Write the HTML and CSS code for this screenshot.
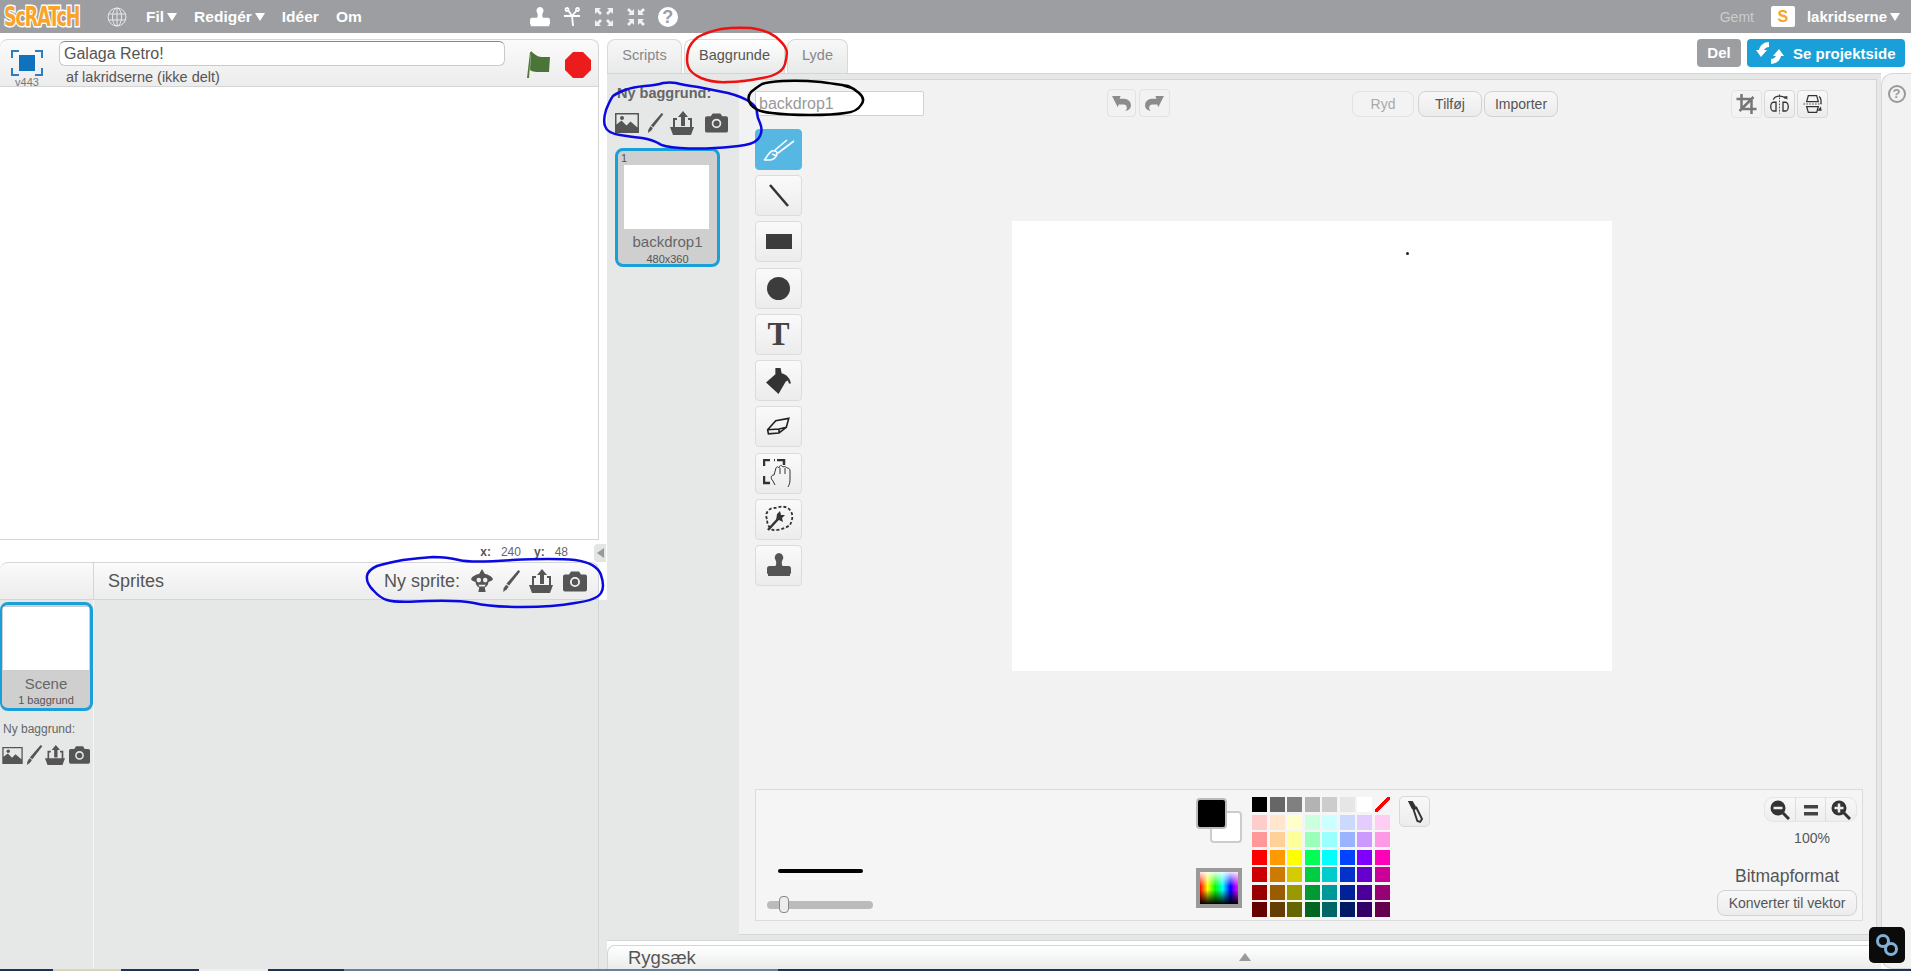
FILE: index.html
```html
<!DOCTYPE html>
<html lang="da">
<head>
<meta charset="utf-8">
<title>Galaga Retro! på Scratch</title>
<link rel="stylesheet" href="styles.css">
</head>
<body>
<svg class="defs" width="0" height="0">
  <symbol id="i-image" viewBox="0 0 24 20"><path fill-rule="evenodd" d="M0 0h24v20H0z M1.500 1.500v10l5-4 5 5 4-4 7 6V1.500z"/><circle cx="7" cy="5" r="2"/></symbol>
  <symbol id="i-brush" viewBox="0 0 24 24"><path d="M20 0l2 1.500L10 17l-3-2z"/><path d="M6.500 16l3 2-2 3-4 3 .5-4z"/></symbol>
  <symbol id="i-upload" viewBox="0 0 24 24"><path d="M13 0l5 6h-3v9h-4V6H8z"/><path d="M3 7h4v2H5v7h15V9h-2V7h4v9h2l-3 8H3l-3-8h3z"/></symbol>
  <symbol id="i-camera" viewBox="0 0 24 20"><path fill-rule="evenodd" d="M2 3h4l2-3h8l2 3h4a2 2 0 0 1 2 2v13a2 2 0 0 1-2 2H2a2 2 0 0 1-2-2V5a2 2 0 0 1 2-2z M12 5.500a5 5 0 1 0 0 10a5 5 0 0 0 0-10z"/><circle cx="12" cy="10.500" r="3.200"/></symbol>
  <symbol id="i-sprite" viewBox="0 0 24 26"><path d="M12 0l3 5c4 1 8 3 9 6-1 2-3 2-5 3 0 3-2 5-4 6l1 5H8l1-5c-2-1-4-3-4-6-2-1-4-1-5-3 1-3 5-5 9-6z"/><circle cx="8.500" cy="12" r="2.500" fill="#eee"/><circle cx="15.500" cy="12" r="2.500" fill="#eee"/><path d="M8 17h8l-1 2H9z" fill="#eee"/></symbol>
  <symbol id="i-stamp" viewBox="0 0 24 24"><path d="M12 0a4.500 4.500 0 0 1 3.500 7c-1 1.500-1 4 0 6h6a2.500 2.500 0 0 1 2.500 2.500V20a1 1 0 0 1-1 1v2H1v-2a1 1 0 0 1-1-1v-4.500A2.500 2.500 0 0 1 2.500 13h6c1-2 1-4.500 0-6A4.500 4.500 0 0 1 12 0z"/></symbol>
</svg>

<header class="topbar">
  <span class="logo-box"><span class="logo">ScRATcH</span></span>
  <svg class="globe" viewBox="0 0 20 20" fill="none" stroke="#e8e8e8" stroke-width="1"><circle cx="10" cy="10" r="9"/><ellipse cx="10" cy="10" rx="4.500" ry="9"/><path d="M10 1v18M1.500 7h17M1.500 13h17"/></svg>
  <nav class="menu">
    <span class="menu-item">Fil<i class="caret"></i></span>
    <span class="menu-item">Redigér<i class="caret"></i></span>
    <span class="menu-item">Idéer</span>
    <span class="menu-item">Om</span>
  </nav>
  <div class="top-tools">
    <svg class="top-icon" fill="#fff"><use href="#i-stamp"/></svg>
    <svg class="top-icon" viewBox="0 0 20 20" fill="none" stroke="#fff" stroke-width="1.800"><path d="M2 9h16M10 8l1 11M6 3l4 6 5-6"/><circle cx="5" cy="2.500" r="1.500"/><circle cx="15.500" cy="2.500" r="1.500"/></svg>
    <svg class="top-icon" viewBox="0 0 20 20" fill="#f0f0f0"><path d="M1 1h6L5 3l3 3-2 2-3-3-2 2zM19 1v6l-2-2-3 3-2-2 3-3-2-2zM1 19v-6l2 2 3-3 2 2-3 3 2 2zM19 19h-6l2-2-3-3 2-2 3 3 2-2z"/></svg>
    <svg class="top-icon" viewBox="0 0 20 20" fill="#f0f0f0"><path d="M8 8H2l2-2-3-3 2-2 3 3 2-2zM12 8V2l2 2 3-3 2 2-3 3 2 2zM8 12v6l-2-2-3 3-2-2 3-3-2-2zM12 12h6l-2 2 3 3-2 2-3-3-2 2z"/></svg>
    <span class="top-help">?</span>
  </div>
  <div class="account">
    <span class="saved">Gemt</span>
    <span class="user-badge">S</span>
    <span class="menu-item user">lakridserne<i class="caret"></i></span>
  </div>
</header>

<main class="main">
  <section class="left">
    <div class="stage-head">
      <div class="fullscreen-wrap">
        <svg class="fullscreen" viewBox="0 0 32 26" fill="none" stroke="#2a7fc4" stroke-width="2"><path d="M1 8V1h7M24 1h7v7M1 18v7h7M24 25h7v-7"/><rect x="8" y="5" width="16" height="16" fill="#0f72bd" stroke="none"/></svg>
        <span class="version">v443</span>
      </div>
      <div class="title-wrap">
        <div class="title-input">Galaga Retro!</div>
        <div class="byline">af lakridserne (ikke delt)</div>
      </div>
      <svg class="flag" viewBox="0 0 26 28"><path d="M5 2l1 0-2 26H2z" fill="#4f7a3a"/><path d="M6 1c5 5 8 6 12 6h7l-1 15H15c-4 0-7 0-10-2z" fill="#4b7439"/></svg>
      <svg class="stop" viewBox="0 0 26 26"><path d="M8 0h10l8 8v10l-8 8H8l-8-8V8z" fill="#ec1c1c"/></svg>
    </div>
    <div class="stage"></div>
    <div class="coords">
      <b>x:</b><span class="coord-val">240</span><b>y:</b><span class="coord-val">48</span>
    </div>
    <div class="sprites">
      <div class="sprites-head">
        <div class="sprites-corner"></div>
        <div class="sprites-title">Sprites</div>
        <div class="new-sprite">
          <span>Ny sprite:</span>
          <svg class="icon-sprite"><use href="#i-sprite"/></svg>
          <svg class="icon-brush"><use href="#i-brush"/></svg>
          <svg class="icon-up"><use href="#i-upload"/></svg>
          <svg class="icon-cam"><use href="#i-camera"/></svg>
        </div>
      </div>
      <div class="sprites-body">
        <aside class="scene-col">
          <div class="scene-tile">
            <div class="scene-thumb"></div>
            <div class="scene-name">Scene</div>
            <div class="scene-count">1 baggrund</div>
          </div>
          <div class="scene-new">Ny baggrund:</div>
          <div class="scene-icons">
            <svg class="si-img"><use href="#i-image"/></svg>
            <svg class="si-brush"><use href="#i-brush"/></svg>
            <svg class="si-up"><use href="#i-upload"/></svg>
            <svg class="si-cam"><use href="#i-camera"/></svg>
          </div>
        </aside>
        <div class="sprite-list"></div>
      </div>
    </div>
    <span class="collapse"><i></i></span>
  </section>

  <section class="right">
    <div class="tabrow">
      <span class="tab tab-scripts">Scripts</span>
      <span class="tab tab-active">Baggrunde</span>
      <span class="tab tab-lyde">Lyde</span>
      <div class="share">
        <span class="btn-share">Del</span>
        <span class="btn-page">
          <svg class="page-arrows" viewBox="0 0 28 24" fill="#fff"><path d="M13 1C8 1 4 4 3 9H0l5 7 6-7H8c1-2 3-3 5-3zM15 23c5 0 9-3 10-8h3l-5-7-6 7h3c-1 2-3 3-5 3z"/></svg>
          Se projektside
        </span>
      </div>
    </div>
    <div class="right-body">
      <div class="work">
        <div class="editor">
          <aside class="backdrops">
            <div class="new-backdrop">Ny baggrund:</div>
            <div class="backdrop-icons">
              <svg class="bi-img"><use href="#i-image"/></svg>
              <svg class="bi-brush"><use href="#i-brush"/></svg>
              <svg class="bi-up"><use href="#i-upload"/></svg>
              <svg class="bi-cam"><use href="#i-camera"/></svg>
            </div>
            <div class="backdrop-tile">
              <span class="backdrop-num">1</span>
              <div class="backdrop-thumb"></div>
              <div class="backdrop-name">backdrop1</div>
              <div class="backdrop-size">480x360</div>
            </div>
          </aside>
          <div class="paint-wrap">
            <div class="paint">
              <div class="paint-top">
                <div class="name-input">backdrop1</div>
                <div class="undo-group">
                  <span class="mini-btn mini-undo"><svg class="mini-svg" viewBox="0 0 20 18" fill="#8c8c8c"><path d="M0 1h9L8 4h3c5 0 9 2 9 7 0 3-2 5-6 6 2-2 2-4 1-6-1-1-3-1-5-1H7L6 13z"/></svg></span>
                  <span class="mini-btn mini-redo"><svg class="mini-svg" viewBox="0 0 20 18" fill="#8c8c8c"><path d="M20 1h-9l1 3H9C4 4 0 6 0 11c0 3 2 5 6 6-2-2-2-4-1-6 1-1 3-1 5-1h3l1 3z"/></svg></span>
                </div>
                <div class="act-group">
                  <span class="act act-ryd">Ryd</span>
                  <span class="act act-add">Tilføj</span>
                  <span class="act act-imp">Importer</span>
                </div>
                <div class="crop-group">
                  <span class="crop crop-off"><svg class="crop-svg" viewBox="0 0 20 20" fill="none" stroke="#777" stroke-width="2.500"><path d="M5 0v15h15M0 5h15v15M3 17L17 3" /></svg></span>
                  <span class="crop"><svg class="crop-svg" viewBox="0 0 24 22" fill="none" stroke="#333" stroke-width="1.500"><path d="M12 0v22" stroke-dasharray="2 1.500" stroke-width="1"/><path d="M8 9v10H5C3 19 2 16 2 14s1-5 3-5zM16 9v10h3c2 0 3-3 3-5s-1-5-3-5z"/><path d="M5 6c1-3 4-4 7-4s5 0 7 3"/><path d="M17 2h4v4z" fill="#333" stroke="none"/></svg></span>
                  <span class="crop"><svg class="crop-svg" viewBox="0 0 22 24" fill="none" stroke="#333" stroke-width="1.500"><path d="M0 12h22" stroke-dasharray="2 1.500" stroke-width="1"/><path d="M6 2h10l2 7H4zM4 15h14l-2 7H6z"/><path d="M19 3c2 2 3 4 2 9"/><path d="M17 20l4-5 1 5z" fill="#333" stroke="none"/></svg></span>
                </div>
              </div>
              <div class="paint-mid">
                <div class="tools">
                  <span class="tool tool-on"><svg class="tool-svg" viewBox="0 0 32 24" fill="none" stroke="#fff" stroke-width="1.600"><path d="M1 22c2-1 4-7 8-9 4-1 5 1 5 3 0 3-4 6-7 6zM12 12L24 2M15 15L31 3M9 16l5 2"/></svg></span>
                  <span class="tool"><svg class="tool-svg" viewBox="0 0 32 24" fill="none" stroke="#333" stroke-width="2.500"><path d="M7 1l18 21"/></svg></span>
                  <span class="tool"><span class="shape-rect"></span></span>
                  <span class="tool"><span class="shape-circle"></span></span>
                  <span class="tool tool-t">T</span>
                  <span class="tool"><svg class="tool-bucket" viewBox="0 0 24 25" fill="#333"><path d="M9 0h5l1 5c4 1 8 4 9 10h-2l-1-3-2 1-7 12L0 14 9 6z"/></svg></span>
                  <span class="tool"><svg class="tool-eraser" viewBox="0 0 32 22" fill="none" stroke="#222" stroke-width="2"><path d="M2 15L12 4 28 1 25 12 16 19 3 20zM2 15l14-1 9-2M16 14v5" /></svg></span>
                  <span class="tool"><svg class="tool-svg tool-tall" viewBox="0 0 32 28" fill="none" stroke="#333" stroke-width="1"><path d="M1 7V1h6M14 1h7v5M1 17v7h6M11 1h1" stroke-width="2.500"/><path d="M10 22c-3-3-2-6 1-6l2-7c1-2 2-1 3 0 0-3 3-3 4-1 2-1 3 0 4 1 2 0 3 1 3 3v9c0 3-1 5-2 7M12 26l-2-4M17 9v6M22 9v6"/></svg></span>
                  <span class="tool"><svg class="tool-svg tool-tall" viewBox="0 0 32 28" fill="none" stroke="#333" stroke-width="1.800"><path d="M4 14c-3-6 3-12 8-11 6-2 12-2 15 2 4 5 2 11 0 15-4 3-12 6-17 5-4-2-6-6-6-11z" stroke-dasharray="3 2"/><path d="M5 25l10-11" stroke-width="2.500"/><path d="M14 9l3-3 1 4 4 0-3 3 1 4-4-2-3 1z" fill="#333" stroke="none"/></svg></span>
                  <span class="tool"><svg class="tool-svg" fill="#555"><use href="#i-stamp"/></svg></span>
                </div>
                <div class="canvas"><i class="canvas-dot"></i></div>
              </div>
              <div class="paint-bottom">
                <div class="stroke-box">
                  <div class="stroke-line"></div>
                  <div class="slider"><i class="slider-thumb"></i></div>
                </div>
                <div class="color-box">
                  <div class="fgbg"><i class="bg-swatch"></i><i class="fg-swatch"></i></div>
                  <div class="spectrum"></div>
                </div>
                <div class="palette">
                  <i style="background:#000"></i><i style="background:#666"></i><i style="background:#808080"></i><i style="background:#b3b3b3"></i><i style="background:#ccc"></i><i style="background:#e6e6e6"></i><i style="background:#fff"></i><i class="swatch-none"></i>
                  <i style="background:#ffcccc"></i><i style="background:#ffe6cc"></i><i style="background:#ffffcc"></i><i style="background:#ccffdd"></i><i style="background:#ccffff"></i><i style="background:#ccd9ff"></i><i style="background:#e5ccff"></i><i style="background:#ffccf2"></i>
                  <i style="background:#ff9999"></i><i style="background:#ffd199"></i><i style="background:#ffff99"></i><i style="background:#99ffbb"></i><i style="background:#99ffff"></i><i style="background:#99b3ff"></i><i style="background:#cc99ff"></i><i style="background:#ff99e6"></i>
                  <i style="background:#ff0000"></i><i style="background:#ff9900"></i><i style="background:#ffff00"></i><i style="background:#00ff55"></i><i style="background:#00ffff"></i><i style="background:#0044ff"></i><i style="background:#8000ff"></i><i style="background:#ff00bb"></i>
                  <i style="background:#cc0000"></i><i style="background:#cc7a00"></i><i style="background:#d4cc00"></i><i style="background:#00cc44"></i><i style="background:#00cccc"></i><i style="background:#0033cc"></i><i style="background:#6600cc"></i><i style="background:#cc0099"></i>
                  <i style="background:#990000"></i><i style="background:#995c00"></i><i style="background:#999900"></i><i style="background:#009933"></i><i style="background:#009999"></i><i style="background:#002299"></i><i style="background:#4d0099"></i><i style="background:#990073"></i>
                  <i style="background:#660000"></i><i style="background:#663d00"></i><i style="background:#666600"></i><i style="background:#006622"></i><i style="background:#006666"></i><i style="background:#001a66"></i><i style="background:#330066"></i><i style="background:#66004d"></i>
                </div>
                <span class="dropper"><svg class="dropper-svg" viewBox="0 0 18 24" fill="#333"><path d="M2 1l5 0 3 5 1 2-3 2-2-1z"/><path d="M8 10l3-2 6 12-2 3-3-1z" fill="none" stroke="#333" stroke-width="2"/></svg></span>
                <div class="format-box">
                  <div class="zoom-group">
                    <span class="zoom-btn"><svg class="zoom-svg" viewBox="0 0 20 20"><circle cx="8" cy="8" r="7.500" fill="#333"/><path d="M3.500 8h9" stroke="#eee" stroke-width="2.500"/><path d="M13 13l6 6" stroke="#333" stroke-width="3"/></svg></span>
                    <span class="zoom-btn zoom-mid"><svg class="zoom-svg" viewBox="0 0 20 20" fill="#444"><path d="M3 5h14v3.500H3zM3 12h14v3.500H3z"/></svg></span>
                    <span class="zoom-btn"><svg class="zoom-svg" viewBox="0 0 20 20"><circle cx="8" cy="8" r="7.500" fill="#333"/><path d="M3.500 8h9M8 3.500v9" stroke="#eee" stroke-width="2.500"/><path d="M13 13l6 6" stroke="#333" stroke-width="3"/></svg></span>
                  </div>
                  <div class="zoom-pct">100%</div>
                  <div class="format-name">Bitmapformat</div>
                  <span class="convert">Konverter til vektor</span>
                </div>
              </div>
            </div>
          </div>
        </div>
        <div class="backpack">
          <span class="backpack-name">Rygsæk</span>
          <i class="backpack-arrow"></i>
        </div>
      </div>
      <aside class="help-panel"><span class="help-icon">?</span></aside>
    </div>
  </section>
</main>
<footer class="taskbar"><i class="tb-a"></i><i class="tb-b"></i><i class="tb-c"></i></footer>

<div class="linkbox"><svg class="link-svg" viewBox="0 0 24 24" fill="none" stroke="#7fb0d8" stroke-width="3"><circle cx="8" cy="8" r="5.500"/><circle cx="16" cy="16" r="5.500"/></svg></div>

<svg class="notes" viewBox="0 0 1911 971" fill="none" stroke-width="2.500" stroke-linejoin="round">
  <path class="note-red" d="M776 37Q785 45 786 49Q788 53 785 64Q782 75 762 78Q743 82 728 82Q713 83 701 78Q690 73 688 66Q686 60 688 51Q690 43 698 37Q707 32 721 29Q735 27 751 28Q767 30 776 37Z"/>
  <path class="note-blue" d="M613 96Q610 100 606 110Q603 120 605 126Q607 133 620 135Q632 137 642 138Q653 140 658 143Q663 147 680 148Q697 149 715 148Q733 147 745 145Q757 143 760 136Q763 130 760 123Q757 117 757 112Q757 107 750 102Q743 97 728 93Q713 90 698 87Q683 85 676 83Q670 82 663 83Q657 85 645 86Q633 87 625 90Q617 93 613 96Z"/>
  <path class="note-black" d="M751 92Q746 98 751 105Q757 112 772 113Q787 115 810 115Q833 115 845 113Q857 112 861 105Q866 99 859 93Q853 88 848 86Q843 85 821 82Q800 80 783 81Q767 82 762 84Q757 87 751 92ZM842 85l10 3"/>
  <path class="note-blue" d="M367 576Q366 583 373 590Q380 598 387 600Q395 603 427 601Q459 600 474 603Q490 607 522 607Q554 607 575 603Q597 600 601 593Q605 587 601 575Q597 563 575 560Q554 558 512 560Q471 563 459 560Q447 557 433 557Q419 558 403 560Q387 563 377 566Q368 570 367 576Z"/>
</svg>
</body>
</html>
```

FILE: styles.css
```css
* { box-sizing: border-box; }
html, body { margin: 0; padding: 0; }
body {
  width: 1911px; height: 971px; overflow: hidden; position: relative;
  display: flex; flex-direction: column; background: #fff; fill: #555;
  font-family: "Liberation Sans", Arial, sans-serif; color: #555;
}
.defs { position: absolute; }
svg { display: block; }

/* top bar */
.topbar { height: 33px; background: #9c9ea2; display: flex; align-items: center; flex: none; }
.logo-box { width: 82px; margin-left: 4px; flex: none; }
.logo {
  display: block; transform: scaleX(.72); transform-origin: 0 50%;
  font: bold 27px/28px "DejaVu Sans Condensed", sans-serif; letter-spacing: -1.500px;
  color: #f9a32a; -webkit-text-stroke: 3px #fff; paint-order: stroke fill; white-space: nowrap;
}
.globe { width: 20px; height: 20px; margin-left: 21px; }
.menu { display: flex; margin-left: 19px; }
.menu-item { font-size: 15.500px; font-weight: bold; color: #fff; display: flex; align-items: center; }
.menu-item + .menu-item { margin-left: 17px; }
.caret {
  width: 0; height: 0; margin-left: 3px; margin-top: 1px;
  border-left: 5px solid transparent; border-right: 5px solid transparent; border-top: 8px solid #fff;
}
.top-tools { display: flex; align-items: center; gap: 12px; margin-left: 168px; }
.top-icon { width: 20px; height: 20px; }
.top-help {
  width: 20px; height: 20px; border-radius: 50%; background: #fff; color: #9c9ea2;
  font: bold 18px/20px "Liberation Sans", sans-serif; text-align: center;
}
.account { margin-left: auto; display: flex; align-items: center; padding-right: 11px; }
.saved { font-size: 14px; color: #ccc; }
.user-badge {
  width: 24px; height: 21px; margin-left: 17px; background: #fff; border-radius: 2px;
  color: #f9a32a; font: bold 16px/21px "Liberation Sans", sans-serif; text-align: center;
}
.menu-item.user { margin-left: 12px; font-size: 15px; }

/* main */
.main { flex: 1; display: flex; min-height: 0; }
.left { width: 607px; flex: none; display: flex; flex-direction: column; position: relative; padding-top: 6px; }

.stage-head {
  width: 599px; height: 48px; flex: none; display: flex;
  background: linear-gradient(#fbfbfb, #ececec);
  border: 1px solid #d4d5d6; border-left: 0; border-top-right-radius: 8px; border-top-left-radius: 8px;
}
.fullscreen-wrap { width: 59px; padding: 10px 0 0 11px; }
.fullscreen { width: 32px; height: 26px; }
.version { display: block; width: 32px; text-align: center; font-size: 11px; line-height: 10px; margin-top: 1px; color: #777; }
.title-wrap { width: 446px; padding-top: 1px; }
.title-input {
  height: 25px; background: #fff; border: 1px solid #c9c9c9; border-top-color: #888; border-radius: 6px;
  font-size: 16px; line-height: 23px; padding-left: 4px; color: #555;
}
.byline { font-size: 14.500px; line-height: 19px; margin: 2px 0 0 7px; }
.flag { width: 26px; height: 28px; margin: 10px 0 0 20px; }
.stop { width: 26px; height: 26px; margin: 12px 0 0 14px; }
.stage { width: 599px; height: 453px; flex: none; background: #fff; border-right: 1px solid #d4d5d6; border-bottom: 1px solid #d4d5d6; }
.coords {
  width: 568px; height: 22px; flex: none; display: flex; align-items: center; justify-content: flex-end;
  font-size: 12px; color: #666; padding-top: 1px;
}
.coords b { margin-left: 13px; font-size: 12px; color: #555; }
.coord-val { margin-left: 10px; }
.sprites { flex: 1; display: flex; flex-direction: column; width: 607px; min-height: 0; }
.sprites-head {
  height: 38px; width: 599px; flex: none; display: flex; align-items: center;
  background: linear-gradient(#fbfbfb, #ececec);
  border: 1px solid #d4d5d6; border-left: 0; border-top-left-radius: 8px; border-top-right-radius: 8px;
}
.sprites-corner { width: 94px; height: 100%; border-right: 1px solid #d4d5d6; }
.sprites-title { font-size: 18px; margin-left: 14px; }
.new-sprite { margin-left: auto; display: flex; align-items: center; font-size: 18px; padding-right: 11px; }
.icon-sprite { width: 22px; height: 24px; margin-left: 11px; }
.icon-brush { width: 22px; height: 24px; margin-left: 7px; }
.icon-up { width: 24px; height: 24px; margin-left: 7px; }
.icon-cam { width: 24px; height: 21px; margin-left: 10px; }
.sprites-body { flex: 1; display: flex; background: #e6e8e8; }
.scene-col { width: 94px; flex: none; border-right: 1px solid #f6f6f6; padding-top: 2px; }
.scene-tile { width: 93px; height: 109px; background: #cfcfcf; border: 3px solid #1aa0d8; border-left-width: 2px; border-radius: 8px; padding-top: 2px; text-align: center; }
.scene-thumb { width: 86px; height: 63px; background: #fff; margin-left: 1px; }
.scene-name { font-size: 15px; line-height: 17px; margin-top: 5px; color: #666; }
.scene-count { font-size: 11px; line-height: 14px; margin-top: 1px; }
.scene-new { font-size: 12px; margin: 10px 0 0 3px; line-height: 16px; color: #666; }
.scene-icons { display: flex; align-items: center; margin: 7px 0 0 2px; }
.si-img { width: 21px; height: 17px; }
.si-brush { width: 20px; height: 22px; margin-left: 1px; }
.si-up { width: 20px; height: 22px; margin-left: 1px; }
.si-cam { width: 21px; height: 18px; margin-left: 4px; }
.sprite-list { width: 505px; border-right: 1px solid #d4d5d6; }
.collapse {
  position: absolute; left: 594px; top: 511px; width: 12px; height: 18px; background: #e3e5e5;
  border-radius: 4px 0 0 4px; display: flex; align-items: center; justify-content: center;
}
.collapse i { width: 0; height: 0; border-top: 5px solid transparent; border-bottom: 5px solid transparent; border-right: 7px solid #999; }

/* right */
.right { flex: 1; display: flex; flex-direction: column; min-width: 0; }
.tabrow { height: 40px; flex: none; display: flex; align-items: flex-end; padding-right: 6px; }
.tab {
  height: 34px; margin-right: 2px; font-size: 14.500px; line-height: 31px; color: #888; text-align: center;
  background: linear-gradient(#f8f8f8, #e8e9e9);
  border: 1px solid #d8d9d9; border-bottom: 0; border-radius: 8px 8px 0 0;
}
.tab-scripts { width: 75px; }
.tab-active { width: 101px; background: linear-gradient(#fff, #e8e9e9); color: #555; }
.tab-lyde { width: 61px; }
.share { margin-left: auto; align-self: flex-start; margin-top: 6px; display: flex; gap: 6px; }
.btn-share {
  width: 44px; height: 28px; background: #9c9ea2; border-radius: 4px; color: #fff;
  font-size: 15px; font-weight: bold; line-height: 28px; text-align: center;
}
.btn-page {
  width: 158px; height: 28px; background: #1aa0d8; border-radius: 4px; color: #fff;
  font-size: 15px; font-weight: bold; display: flex; align-items: center; padding-left: 9px;
}
.page-arrows { width: 28px; height: 24px; margin-right: 9px; }
.right-body { flex: 1; display: flex; min-height: 0; }
.work { width: 1274px; flex: none; display: flex; flex-direction: column; }
.editor { height: 868px; flex: none; display: flex; background: #e6e8e8; border-top: 1px solid #d4d5d6; border-bottom: 1px solid #d4d5d6; }
.backdrops { width: 132px; flex: none; padding-left: 8px; }
.new-backdrop { font-size: 14.500px; font-weight: bold; line-height: 18px; margin: 10px 0 0 2px; color: #666; }
.backdrop-icons { display: flex; align-items: center; margin: 8px 0 0 0; height: 26px; }
.bi-img { width: 24px; height: 20px; }
.bi-brush { width: 20px; height: 24px; margin-left: 6px; }
.bi-up { width: 24px; height: 24px; margin-left: 5px; }
.bi-cam { width: 23px; height: 20px; margin-left: 11px; }
.backdrop-tile {
  width: 105px; height: 119px; margin-top: 12px; background: #cfcfcf; border: 3px solid #1aa0d8; border-radius: 8px;
  position: relative; text-align: center; padding-top: 14px;
}
.backdrop-num { position: absolute; left: 3px; top: 1px; font-size: 11px; line-height: 13px; }
.backdrop-thumb { width: 85px; height: 64px; background: #fff; margin-left: 6px; }
.backdrop-name { font-size: 15px; line-height: 17px; margin-top: 4px; color: #666; }
.backdrop-size { font-size: 11px; line-height: 13px; margin-top: 3px; }
.paint-wrap { flex: 1; padding: 5px 4px 6px 0; min-width: 0; }
.paint { height: 856px; background: #f2f2f2; border-top: 1px solid #d4d5d6; border-bottom: 1px solid #d4d5d6; border-right: 1px solid #d4d5d6; padding: 0 0 0 16px; display: flex; flex-direction: column; }
.paint-top { height: 49px; flex: none; display: flex; padding-top: 11px; align-items: flex-start; }
.name-input { width: 169px; height: 25px; background: #fff; border: 1px solid #d0d0d0; border-radius: 2px; font-size: 16px; line-height: 23px; padding-left: 3px; color: #999; }
.undo-group { display: flex; gap: 3px; margin-left: 183px; margin-top: -2px; }
.mini-btn { height: 28px; border: 1px solid #e2e2e2; border-radius: 4px; display: flex; align-items: center; justify-content: center; }
.mini-undo { width: 29px; }
.mini-redo { width: 31px; }
.mini-svg { width: 19px; height: 17px; }
.act-group { display: flex; margin-left: 182px; }
.act {
  height: 26px; font-size: 14px; line-height: 24px; text-align: center; border: 1px solid #d2d2d2; border-radius: 8px;
  background: linear-gradient(#f8f8f8, #ececec); color: #555;
}
.act-ryd { width: 62px; color: #aaa; border-color: #e2e2e2; background: #f3f3f3; margin-right: 4px; }
.act-add { width: 64px; margin-right: 2px; }
.act-imp { width: 74px; }
.crop-group { display: flex; margin-left: 173px; margin-top: -1px; gap: 2px; }
.crop {
  width: 31px; height: 28px; border: 1px solid #d8d8d8; border-radius: 4px; display: flex; align-items: center; justify-content: center;
  background: linear-gradient(#f8f8f8, #ececec);
}
.crop-off { background: #f3f3f3; border-color: #e4e4e4; }
.crop-svg { width: 21px; height: 20px; }
.paint-mid { height: 660px; flex: none; display: flex; }
.tools { width: 47px; display: flex; flex-direction: column; gap: 5.220px; }
.tool {
  width: 47px; height: 41px; flex: none; border: 1px solid #dcdcdc; border-radius: 4px; background: linear-gradient(#fafafa, #ececec);
  display: flex; align-items: center; justify-content: center;
}
.tool-on { background: #56b7e3; border-color: #56b7e3; }
.tool-svg { width: 32px; height: 24px; }
.tool-tall { height: 28px; }
.tool-bucket { width: 25px; height: 26px; }
.tool-eraser { width: 26px; height: 19px; }
.shape-rect { width: 26px; height: 15px; background: #3c3c3c; }
.shape-circle { width: 23px; height: 23px; border-radius: 50%; background: #3c3c3c; }
.tool-t { font: bold 33px/36px "Liberation Serif", serif; color: #444; }
.canvas { width: 600px; height: 450px; margin: 92px 0 0 210px; background: #fff; position: relative; }
.canvas-dot { position: absolute; left: 394px; top: 31px; width: 3px; height: 3px; background: #222; border-radius: 50%; }
.paint-bottom {
  width: 1108px; height: 132px; flex: none; display: flex; background: #f5f5f5; border: 1px solid #dcdcdc;
}
.stroke-box { width: 440px; padding: 79px 0 0 11px; }
.stroke-line { width: 85px; height: 4px; margin-left: 11px; background: #000; border-radius: 2px; }
.slider { width: 106px; height: 8px; margin-top: 28px; background: #bbb; border-radius: 4px; position: relative; }
.slider-thumb { position: absolute; left: 12px; top: -5px; width: 10px; height: 17px; background: #ececec; border: 1px solid #888; border-radius: 4px; }
.color-box { width: 46px; padding-top: 8px; }
.fgbg { height: 46px; position: relative; }
.fg-swatch { position: absolute; left: 0; top: 0; width: 31px; height: 31px; background: #000; border: 2px solid #bbb; border-radius: 4px; }
.bg-swatch { position: absolute; left: 14px; top: 13px; width: 32px; height: 32px; background: #fff; border: 2px solid #ccc; border-radius: 4px; }
.spectrum {
  width: 46px; height: 40px; margin-top: 24px; border: 4px solid #9a9a9a;
  background:
    linear-gradient(rgba(255,255,255,.9), rgba(255,255,255,0) 45%, rgba(0,0,0,0) 55%, #000),
    linear-gradient(90deg, #f00, #ff0, #0f0, #0ff, #00f, #f0f);
}
.palette { width: 138px; margin: 7px 0 0 10px; display: grid; grid-template-columns: repeat(8, 15px); grid-auto-rows: 15px; gap: 2.500px; align-content: start; }
.palette i { display: block; }
.swatch-none { background: linear-gradient(135deg, transparent 42%, #f00 42%, #f00 58%, transparent 58%); }
.dropper { width: 31px; height: 31px; margin: 6px 0 0 9px; border: 1px solid #d8d8d8; border-radius: 5px; background: linear-gradient(#f8f8f8, #ececec); display: flex; align-items: center; justify-content: center; }
.dropper-svg { width: 17px; height: 23px; }
.format-box { margin-left: auto; padding: 7px 5px 0 0; width: 146px; display: flex; flex-direction: column; align-items: flex-end; }
.zoom-group { width: 93px; height: 25px; display: flex; border: 1px solid #e4e4e4; border-radius: 9px; background: linear-gradient(#f8f8f8, #eeeeee); }
.zoom-btn { flex: 1; display: flex; align-items: center; justify-content: center; }
.zoom-mid { border-left: 1px solid #ddd; border-right: 1px solid #ddd; }
.zoom-svg { width: 20px; height: 20px; }
.zoom-pct { width: 93px; text-align: center; font-size: 14px; line-height: 16px; margin-top: 8px; padding-left: 3px; }
.format-name { width: 140px; text-align: center; font-size: 17.500px; line-height: 20px; margin-top: 20px; }
.convert {
  width: 140px; height: 26px; margin-top: 4px; font-size: 14px; line-height: 24px; text-align: center; white-space: nowrap;
  border: 1px solid #d2d2d2; border-radius: 8px; background: linear-gradient(#f8f8f8, #ececec);
}
.backpack {
  height: 24px; flex: none; margin-top: 4px; position: relative; display: flex; align-items: center;
  background: linear-gradient(#fff, #eaecec); border-top: 1px solid #d4d5d6; border-left: 1px solid #d4d5d6; border-top-left-radius: 8px;
}
.backpack-name { font-size: 18.500px; margin-left: 20px; }
.backpack-arrow {
  position: absolute; left: 631px; top: 7px; width: 0; height: 0;
  border-left: 6px solid transparent; border-right: 6px solid transparent; border-bottom: 8px solid #999;
}
.help-panel {
  flex: 1; background: #f2f2f2; border: 1px solid #d4d5d6; border-right: 0; border-radius: 12px 0 0 12px; display: flex; justify-content: center; padding-top: 11px;
}
.help-icon {
  width: 18px; height: 18px; border: 2px solid #999; border-radius: 50%; color: #999;
  font: bold 13px/14px "Liberation Sans", sans-serif; text-align: center;
}
.taskbar { height: 2px; flex: none; background: #1f3350; position: relative; display: flex; }
.tb-a { width: 68px; margin-left: 53px; background: #d8d4b8; }
.tb-b { width: 69px; margin-left: 78px; background: #eee; }
.tb-c { width: 434px; margin-left: 76px; background: #6a7f98; }
.linkbox {
  position: absolute; left: 1869px; top: 927px; width: 36px; height: 36px; background: #0b0b0b; border-radius: 5px;
  display: flex; align-items: center; justify-content: center;
}
.link-svg { width: 24px; height: 24px; }
.notes { position: absolute; left: 0; top: 0; width: 1911px; height: 971px; pointer-events: none; }
.note-red { stroke: #ee1111; }
.note-blue { stroke: #0a0ae0; }
.note-black { stroke: #000; }
```
